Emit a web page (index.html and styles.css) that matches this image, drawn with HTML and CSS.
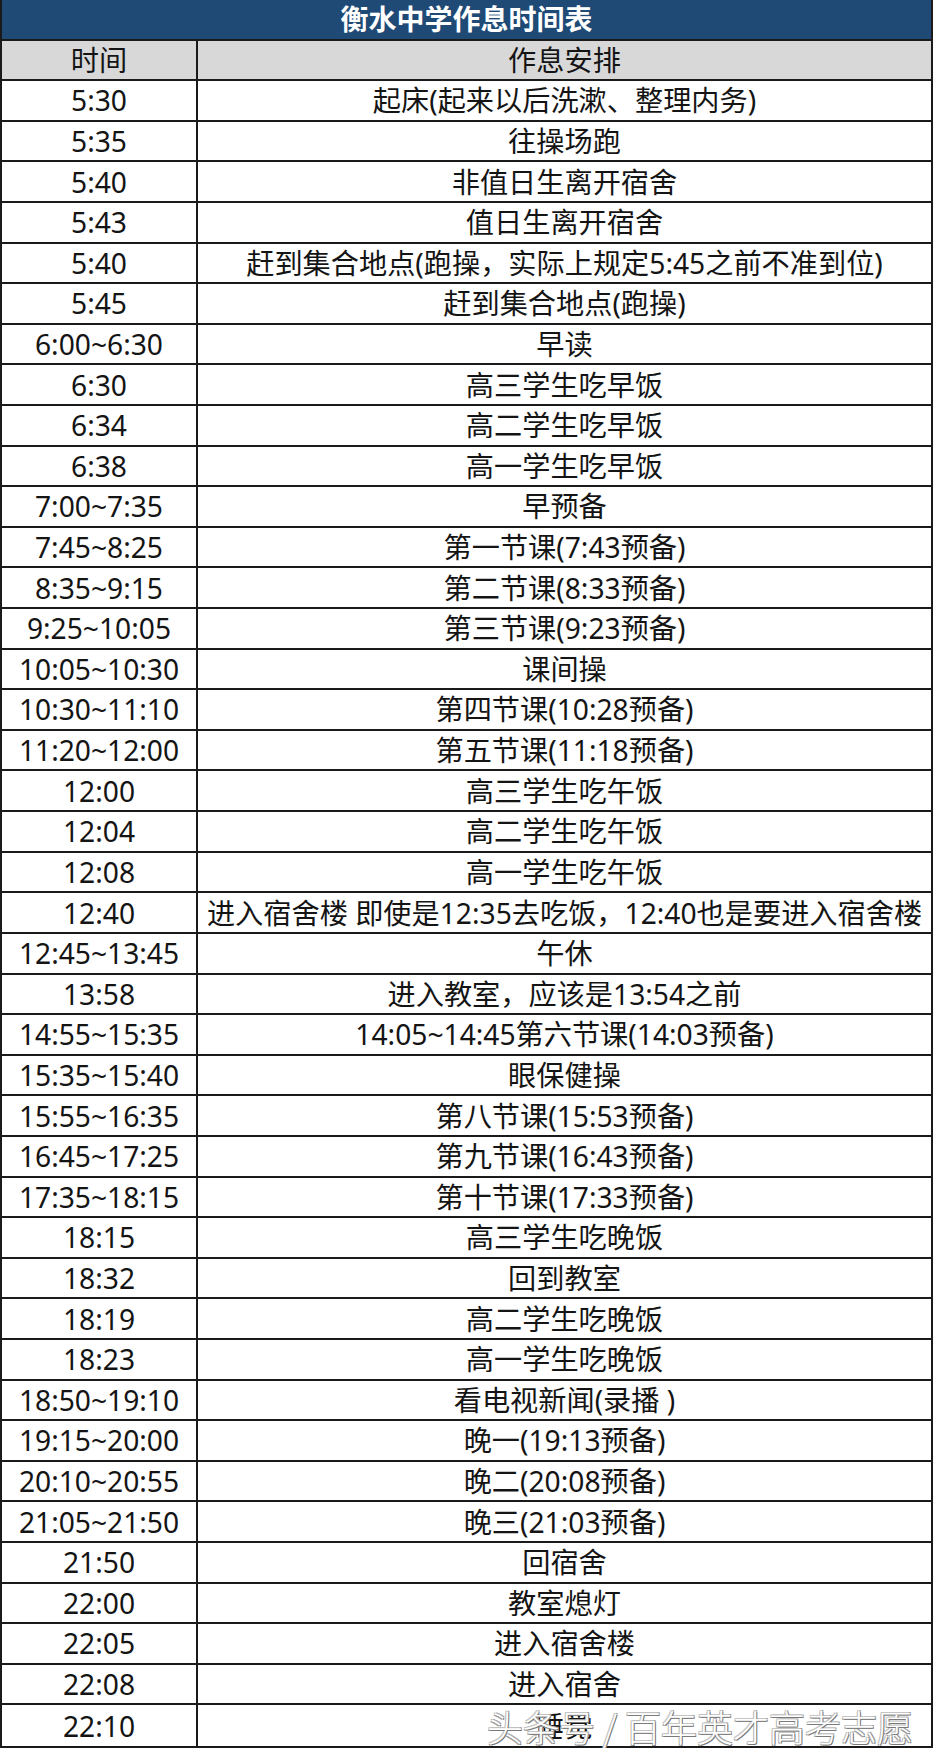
FILE: index.html
```html
<!DOCTYPE html>
<html lang="zh-CN">
<head>
<meta charset="utf-8">
<title>衡水中学作息时间表</title>
<link rel="stylesheet" href="styles.css">
</head>
<body>
<div class="page">
  <div class="sheet">
    <div class="title">衡水中学作息时间表</div>
    <div class="cell time head">时间</div><div class="cell act head">作息安排</div>
    <div class="cell time">5:30</div><div class="cell act">起床(起来以后洗漱、整理内务)</div>
    <div class="cell time">5:35</div><div class="cell act">往操场跑</div>
    <div class="cell time">5:40</div><div class="cell act">非值日生离开宿舍</div>
    <div class="cell time">5:43</div><div class="cell act">值日生离开宿舍</div>
    <div class="cell time">5:40</div><div class="cell act">赶到集合地点(跑操，实际上规定5:45之前不准到位)</div>
    <div class="cell time">5:45</div><div class="cell act">赶到集合地点(跑操)</div>
    <div class="cell time">6:00~6:30</div><div class="cell act">早读</div>
    <div class="cell time">6:30</div><div class="cell act">高三学生吃早饭</div>
    <div class="cell time">6:34</div><div class="cell act">高二学生吃早饭</div>
    <div class="cell time">6:38</div><div class="cell act">高一学生吃早饭</div>
    <div class="cell time">7:00~7:35</div><div class="cell act">早预备</div>
    <div class="cell time">7:45~8:25</div><div class="cell act">第一节课(7:43预备)</div>
    <div class="cell time">8:35~9:15</div><div class="cell act">第二节课(8:33预备)</div>
    <div class="cell time">9:25~10:05</div><div class="cell act">第三节课(9:23预备)</div>
    <div class="cell time">10:05~10:30</div><div class="cell act">课间操</div>
    <div class="cell time">10:30~11:10</div><div class="cell act">第四节课(10:28预备)</div>
    <div class="cell time">11:20~12:00</div><div class="cell act">第五节课(11:18预备)</div>
    <div class="cell time">12:00</div><div class="cell act">高三学生吃午饭</div>
    <div class="cell time">12:04</div><div class="cell act">高二学生吃午饭</div>
    <div class="cell time">12:08</div><div class="cell act">高一学生吃午饭</div>
    <div class="cell time">12:40</div><div class="cell act">进入宿舍楼 即使是12:35去吃饭，12:40也是要进入宿舍楼</div>
    <div class="cell time">12:45~13:45</div><div class="cell act">午休</div>
    <div class="cell time">13:58</div><div class="cell act">进入教室，应该是13:54之前</div>
    <div class="cell time">14:55~15:35</div><div class="cell act">14:05~14:45第六节课(14:03预备)</div>
    <div class="cell time">15:35~15:40</div><div class="cell act">眼保健操</div>
    <div class="cell time">15:55~16:35</div><div class="cell act">第八节课(15:53预备)</div>
    <div class="cell time">16:45~17:25</div><div class="cell act">第九节课(16:43预备)</div>
    <div class="cell time">17:35~18:15</div><div class="cell act">第十节课(17:33预备)</div>
    <div class="cell time">18:15</div><div class="cell act">高三学生吃晚饭</div>
    <div class="cell time">18:32</div><div class="cell act">回到教室</div>
    <div class="cell time">18:19</div><div class="cell act">高二学生吃晚饭</div>
    <div class="cell time">18:23</div><div class="cell act">高一学生吃晚饭</div>
    <div class="cell time">18:50~19:10</div><div class="cell act">看电视新闻(录播 )</div>
    <div class="cell time">19:15~20:00</div><div class="cell act">晚一(19:13预备)</div>
    <div class="cell time">20:10~20:55</div><div class="cell act">晚二(20:08预备)</div>
    <div class="cell time">21:05~21:50</div><div class="cell act">晚三(21:03预备)</div>
    <div class="cell time">21:50</div><div class="cell act">回宿舍</div>
    <div class="cell time">22:00</div><div class="cell act">教室熄灯</div>
    <div class="cell time">22:05</div><div class="cell act">进入宿舍楼</div>
    <div class="cell time">22:08</div><div class="cell act">进入宿舍</div>
    <div class="cell time">22:10</div><div class="cell act">睡觉</div>
  </div>
  <div class="watermark">头条号 / 百年英才高考志愿</div>
</div>
</body>
</html>
```

FILE: styles.css
```css
html, body {
  margin: 0;
  padding: 0;
  background: #ffffff;
}

.page {
  position: relative;
  width: 933px;
  height: 1748px;
  overflow: hidden;
}

.sheet {
  box-sizing: border-box;
  width: 933px;
  height: 1748px;
  display: grid;
  grid-template-columns: 196px 1fr;
  grid-template-rows: repeat(43, 1fr);
  border-left: 2px solid #1a1a1a;
  border-right: 2px solid #1a1a1a;
  border-bottom: 2px solid #1a1a1a;
  font-family: "Noto Sans", "Noto Sans CJK SC", sans-serif;
  font-size: 28.2px;
  color: #141414;
}

.title {
  grid-column: 1 / span 2;
  background: #1f4a76;
  color: #ffffff;
  font-weight: 700;
  font-size: 28px;
  line-height: 1;
  display: flex;
  align-items: center;
  justify-content: center;
  border-bottom: 2px solid #1a1a1a;
}

.cell {
  display: flex;
  align-items: center;
  justify-content: center;
  white-space: nowrap;
  border-bottom: 2px solid #1a1a1a;
  line-height: 1;
}

.time {
  border-right: 2px solid #1a1a1a;
}

.head {
  background: #d8d8d8;
}

.sheet > .cell:nth-last-child(-n+2) {
  border-bottom: none;
}

.watermark {
  position: absolute;
  right: 20px;
  bottom: 0;
  font-family: "Noto Sans CJK SC", sans-serif;
  font-weight: 300;
  font-size: 36px;
  line-height: 1.2;
  color: #ffffff;
  text-shadow: 1px 1px 0 #7a7a7a, -1px -1px 0 #c4c4c4, 1px -1px 0 #a0a0a0, -1px 1px 0 #a0a0a0;
  white-space: nowrap;
}
```
